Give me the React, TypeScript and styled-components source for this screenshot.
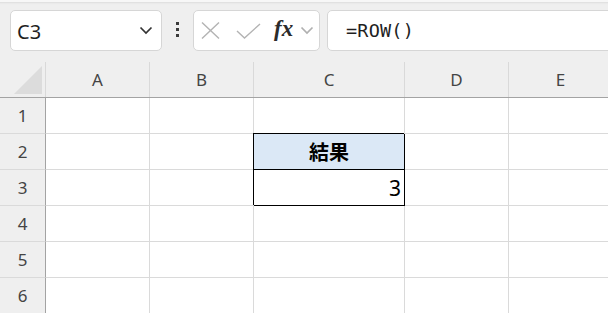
import styled, { createGlobalStyle } from "styled-components";

const GlobalStyle = createGlobalStyle`
  html, body {
    margin: 0;
    padding: 0;
    background: #efefef;
    overflow: hidden;
  }
  * { box-sizing: border-box; }
`;

const COLUMNS = [
  { name: "A", width: 104 },
  { name: "B", width: 104 },
  { name: "C", width: 151 },
  { name: "D", width: 104 },
  { name: "E", width: 104 },
];

const ROWS = [1, 2, 3, 4, 5, 6];

const VALUES: Record<string, { text: string; head?: boolean }> = {
  C2: { text: "結果", head: true },
  C3: { text: "3" },
};

function ChevronIcon({ color }: { color: string }) {
  return (
    <svg width="14" height="9" viewBox="0 0 14 9">
      <path d="M1.5 1.5 L7 7 L12.5 1.5" fill="none" stroke={color} strokeWidth="1.7" />
    </svg>
  );
}

function App() {
  return (
    <>
      <GlobalStyle />
      <Page>
        <Toolbar>
          <NameBox>
            <NameText>C3</NameText>
            <ChevronIcon color="#333" />
          </NameBox>
          <Grip>
            <Dot />
            <Dot />
            <Dot />
          </Grip>
          <ButtonsBox>
            <svg width="19" height="17" viewBox="0 0 19 17">
              <path d="M1 0.5 L18 16.5 M18 0.5 L1 16.5" stroke="#b3b3b3" strokeWidth="1.4" />
            </svg>
            <svg width="25" height="16" viewBox="0 0 25 16">
              <path d="M1 8 L8.5 15 L24 1" fill="none" stroke="#b3b3b3" strokeWidth="1.4" />
            </svg>
            <Fx>fx</Fx>
            <ChevronIcon color="#b0b0b0" />
          </ButtonsBox>
          <FormulaBox>
            <FormulaText>=ROW()</FormulaText>
          </FormulaBox>
        </Toolbar>
        <Sheet>
          <HeaderRow>
            <Corner>
              <Triangle />
            </Corner>
            {COLUMNS.map((c) => (
              <ColHeader key={c.name} $width={c.width}>
                {c.name}
              </ColHeader>
            ))}
          </HeaderRow>
          {ROWS.map((r) => (
            <Row key={r}>
              <RowHeader>{r}</RowHeader>
              {COLUMNS.map((c) => {
                const v = VALUES[c.name + r];
                return (
                  <Cell key={c.name} $width={c.width} $boxed={!!v} $head={!!v?.head}>
                    {v?.text}
                  </Cell>
                );
              })}
            </Row>
          ))}
        </Sheet>
      </Page>
    </>
  );
}

export default App;

const Page = styled.div`
  width: 608px;
  height: 313px;
  overflow: hidden;
  background: #efefef;
  border-top: 2px solid #f7f7f7;
  box-shadow: inset 0 3px 2px -2px #dcdcdc;
`;

const Toolbar = styled.div`
  display: flex;
  align-items: flex-start;
  height: 60px;
  padding: 8px 0 0 10px;
  white-space: nowrap;
`;

const Box = styled.div`
  display: flex;
  align-items: center;
  flex-shrink: 0;
  height: 41px;
  background: #ffffff;
  border: 1px solid #d6d6d6;
  border-radius: 5px;
`;

const NameBox = styled(Box)`
  width: 152px;
  justify-content: space-between;
  padding: 0 8px 0 6px;
`;

const NameText = styled.span`
  font-family: "Noto Sans", sans-serif;
  font-size: 20px;
  color: #1f1f1f;
  margin-top: 2px;
`;

const Grip = styled.div`
  display: flex;
  flex-direction: column;
  align-items: center;
  flex-shrink: 0;
  gap: 3px;
  width: 31px;
  height: 41px;
  padding-top: 12px;
`;

const Dot = styled.span`
  width: 3px;
  height: 3px;
  background: #3a3a3a;
`;

const ButtonsBox = styled(Box)`
  width: 127px;
  padding: 0 0 0 7px;

  & > svg:nth-child(1) {
    margin-right: 16px;
  }
  & > svg:nth-child(2) {
    margin-right: 13px;
  }
`;

const Fx = styled.span`
  font-family: "Liberation Serif", "DejaVu Serif", serif;
  font-style: italic;
  font-weight: bold;
  font-size: 23px;
  color: #2b2b2b;
  margin-right: 7px;
  margin-top: -3px;
`;

const FormulaBox = styled(Box)`
  width: 320px;
  margin-left: 7px;
  padding-left: 18px;
`;

const FormulaText = styled.span`
  font-family: "DejaVu Sans Mono", "Liberation Mono", monospace;
  font-size: 18.5px;
  color: #1f1f1f;
  letter-spacing: 0.2px;
`;

const Sheet = styled.div`
  display: flex;
  flex-direction: column;
`;

const HeaderRow = styled.div`
  display: flex;
  height: 36px;
  border-bottom: 1px solid #a3a3a3;
`;

const Corner = styled.div`
  position: relative;
  width: 46px;
  height: 35px;
  border-right: 1px solid #d9d9d9;
  flex-shrink: 0;
`;

const Triangle = styled.div`
  position: absolute;
  left: 14px;
  top: 4px;
  width: 28px;
  height: 28px;
  background: #dcdcdc;
  clip-path: polygon(100% 0, 100% 100%, 0 100%);
`;

const ColHeader = styled.div<{ $width: number }>`
  display: flex;
  align-items: center;
  justify-content: center;
  flex-shrink: 0;
  width: ${({ $width }) => $width}px;
  height: 35px;
  border-right: 1px solid #d9d9d9;
  font-family: "Noto Sans", sans-serif;
  font-size: 17px;
  color: #444444;
`;

const Row = styled.div`
  display: flex;
  height: 36px;
`;

const RowHeader = styled.div`
  display: flex;
  align-items: center;
  justify-content: center;
  flex-shrink: 0;
  width: 46px;
  height: 36px;
  border-right: 1px solid #a3a3a3;
  border-bottom: 1px solid #dadada;
  font-family: "Noto Sans", sans-serif;
  font-size: 17px;
  color: #444444;
`;

const Cell = styled.div<{ $width: number; $boxed: boolean; $head: boolean }>`
  display: flex;
  align-items: center;
  justify-content: ${({ $head }) => ($head ? "center" : "flex-end")};
  flex-shrink: 0;
  width: ${({ $width }) => $width}px;
  height: 36px;
  padding: 0 3px;
  background: ${({ $head }) => ($head ? "#dbe8f6" : "#ffffff")};
  border-right: 1px solid ${({ $boxed }) => ($boxed ? "#000000" : "#dadada")};
  border-bottom: 1px solid ${({ $boxed }) => ($boxed ? "#000000" : "#dadada")};
  box-shadow: ${({ $boxed }) => ($boxed ? "-1px -1px 0 0 #000000" : "none")};
  font-family: ${({ $head }) => ($head ? `"Noto Sans CJK JP", sans-serif` : `"Noto Sans", sans-serif`)};
  font-size: ${({ $head }) => ($head ? "20px" : "21px")};
  font-weight: ${({ $head }) => ($head ? 700 : 400)};
  color: #000000;
`;
